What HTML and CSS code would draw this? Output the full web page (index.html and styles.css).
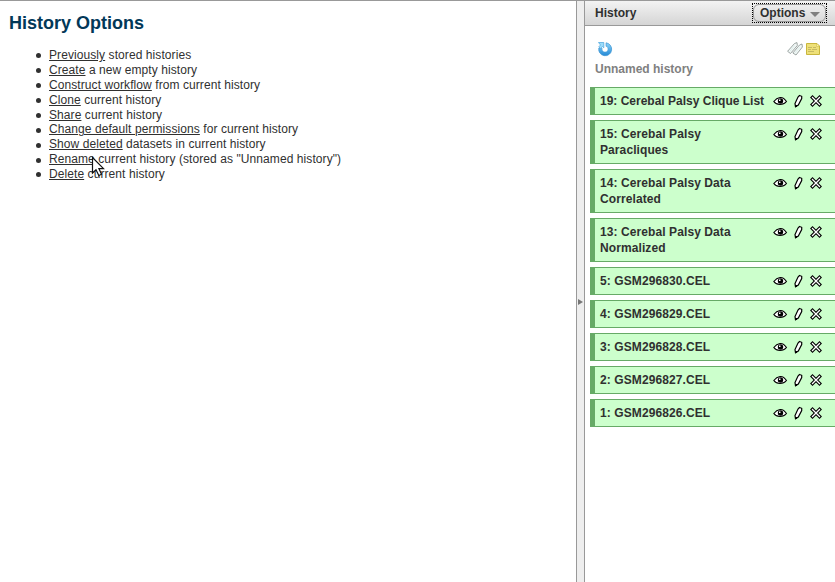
FILE: index.html
```html
<!DOCTYPE html>
<html lang="en">
<head>
<meta charset="utf-8">
<title>History Options</title>
<link rel="stylesheet" href="styles.css">
</head>
<body>
<svg class="defs" width="0" height="0">
  <symbol id="actions" viewBox="0 0 50 14">
    <path d="M.8 7.500Q3.500 4 7 3.500T13.500 7.500Q11 10.500 7 10.500T.8 7.500Z" fill="#fff" stroke="#000" stroke-width="1.100"/>
    <circle cx="7.500" cy="7" r="2.700"/>
    <path d="M6 5.500h1.500v1.500H6z" fill="#fff"/>
    <path d="M26.500 1.500L28.700 2.300V4.500L25.300 11L22.500 12.700L22 9.500L25 3Z" fill="#fff" stroke="#000" stroke-width="1.200"/>
    <path d="M22 11h2v2h-2z"/>
    <path d="M39.500 3.500L46.500 10.500M46.500 3.500L39.500 10.500" stroke="#000" stroke-width="3.500" stroke-linecap="square"/>
    <path d="M39.500 3.500L46.500 10.500M46.500 3.500L39.500 10.500" stroke="#fff" stroke-width="1.300" stroke-linecap="square"/>
  </symbol>
</svg>
<div class="page">
  <main class="center">
    <h1>History Options</h1>
    <ul>
      <li><a>Previously</a> stored histories</li>
      <li><a>Create</a> a new empty history</li>
      <li><a>Construct workflow</a> from current history</li>
      <li><a>Clone</a> current history</li>
      <li><a>Share</a> current history</li>
      <li><a>Change default permissions</a> for current history</li>
      <li><a>Show deleted</a> datasets in current history</li>
      <li><a>Rename</a> current history (stored as "Unnamed history")</li>
      <li><a>Delete</a> current history</li>
    </ul>
    <svg class="cursor" width="14" height="22" viewBox="0 0 14 22"><path d="M1.500 1.500V17L5 13.700L7.800 19.500L10.500 18.200L7.900 12.600H12.500Z" fill="#fff" stroke="#111" stroke-width="1.200"/></svg>
  </main>
  <div class="divider"><i></i></div>
  <aside>
    <header><span>History</span><span class="focus"><span class="options">Options<i></i></span></span></header>
    <div class="tools">
      <svg width="16" height="16" viewBox="0 0 16 16">
        <defs><linearGradient id="blue" x1="0" y1="0" x2="0" y2="1"><stop offset="0" stop-color="#8bd3f8"/><stop offset="1" stop-color="#2489d6"/></linearGradient></defs>
        <path d="M9 1.800A6.500 6.500 0 1 1 1.800 7L5.500 7.500A2.700 2.700 0 1 0 9 5.600Z" fill="url(#blue)" stroke="#3f97d3" stroke-width=".7"/>
        <circle cx="8" cy="8" r="2.600" fill="#fff"/>
        <path d="M7.500 1.500V5.500L8.500 8" fill="none" stroke="#fff" stroke-width="1.200"/>
        <path d="M1.500 1.500H6.800V6.800L5.300 5.500L3.500 7.500L1.800 5.800L3.500 4Z" fill="#9bdcfb" stroke="#55abdf" stroke-width=".8"/>
      </svg>
      <span class="right">
        <svg width="16" height="16" viewBox="0 0 16 16" fill="#f3f8f7" stroke="#87918e" stroke-width=".8">
          <path d="M.6 10.300L7.500 2.500L10 1.600L10.300 4.500L3.500 12.500Z"/>
          <path d="M5.800 12L12.500 4L15 3L15.400 6L9 14Z"/>
          <path d="M2.800 10.300L7.900 4.500M8 11.900L12.900 6.200" stroke="#d7ebe7"/>
        </svg>
        <svg width="16" height="16" viewBox="0 0 16 16">
          <path d="M1.500 2.500H12L14.500 5V13.500H1.500Z" fill="#eee078" stroke="#c9b63d"/>
          <path d="M11.500 3V5.500H14" fill="#fff4a5" stroke="#d9c95c" stroke-width=".8"/>
          <path d="M3 6.500H7M8 6.500H11M3 8.500H6M7 8.500H12M3 10.500H9" stroke="#bcae5d" stroke-width=".8"/>
        </svg>
      </span>
    </div>
    <div class="name">Unnamed history</div>
    <div class="items">
      <div class="item tight"><b>19: Cerebal Palsy Clique List</b><svg><use href="#actions"/></svg></div>
      <div class="item"><b>15: Cerebal Palsy<br>Paracliques</b><svg><use href="#actions"/></svg></div>
      <div class="item"><b>14: Cerebal Palsy Data<br>Correlated</b><svg><use href="#actions"/></svg></div>
      <div class="item"><b>13: Cerebal Palsy Data<br>Normalized</b><svg><use href="#actions"/></svg></div>
      <div class="item"><b>5: GSM296830.CEL</b><svg><use href="#actions"/></svg></div>
      <div class="item"><b>4: GSM296829.CEL</b><svg><use href="#actions"/></svg></div>
      <div class="item"><b>3: GSM296828.CEL</b><svg><use href="#actions"/></svg></div>
      <div class="item"><b>2: GSM296827.CEL</b><svg><use href="#actions"/></svg></div>
      <div class="item"><b>1: GSM296826.CEL</b><svg><use href="#actions"/></svg></div>
    </div>
  </aside>
</div>
</body>
</html>
```

FILE: styles.css
```css
* { box-sizing: border-box; }
body {
  margin: 0;
  overflow: hidden;
  background: #fff;
  color: #303030;
  font: 12px/16px "Liberation Sans", Arial, sans-serif;
}
.defs { position: absolute; }
.page {
  display: grid;
  grid-template-columns: 576px 9px 250px;
  height: 582px;
  border-top: 1px solid #999;
}
.center { position: relative; padding: 11px 9px; }
h1 { margin: 0; font-size: 18px; line-height: 22px; color: #023858; }
ul {
  margin: 14px 0 0;
  padding: 0 0 0 27px;
  list-style: none;
  line-height: 14.875px;
  letter-spacing: 0.08px;
}
li { display: flex; align-items: center; white-space: pre; }
li::before {
  content: "";
  width: 5px;
  height: 5px;
  margin: 1px 8px 0 0;
  border-radius: 50%;
  background: #303030;
}
a { text-decoration: underline; }
.cursor { position: absolute; left: 91px; top: 155px; }
.divider {
  display: flex;
  align-items: center;
  background: #eee;
  border: solid #999;
  border-width: 0 1px;
}
.divider i {
  margin: 20px 0 0 1px;
  border: solid transparent;
  border-width: 3px 0 3px 5px;
  border-left-color: #777;
}
header {
  display: flex;
  justify-content: space-between;
  height: 25px;
  padding: 2px 8px 0 10px;
  border-bottom: 1px solid #999;
  background: linear-gradient(#f3f3f3, #d5d5d5);
  font-weight: bold;
  line-height: 20px;
}
.focus { width: 75px; height: 20px; border: 1px dotted #000; }
.options {
  display: flex;
  align-items: center;
  height: 18px;
  padding-left: 6px;
  border: 1px solid #999;
  border-radius: 6px;
}
.options i {
  margin: 3px 0 0 5px;
  border: solid transparent;
  border-width: 5px 5px 0;
  border-top-color: #808080;
}
.tools {
  display: flex;
  justify-content: space-between;
  padding: 15px 14px 0 12px;
}
.tools svg { display: block; }
.right { display: flex; gap: 2px; }
.name { margin: 4px 10px 0; font-weight: bold; color: #808080; }
.items { display: grid; gap: 5px; margin: 10px 0 0 5px; }
.item {
  display: flex;
  justify-content: space-between;
  padding: 5px 12px 5px 5px;
  border: solid #66aa66;
  border-width: 1px 0 1px 5px;
  background: #ccffcc;
}
.item b { white-space: nowrap; letter-spacing: 0.09px; }
.tight b { letter-spacing: 0; }
.item svg { flex: none; width: 50px; height: 14px; margin-top: 1px; }
```
